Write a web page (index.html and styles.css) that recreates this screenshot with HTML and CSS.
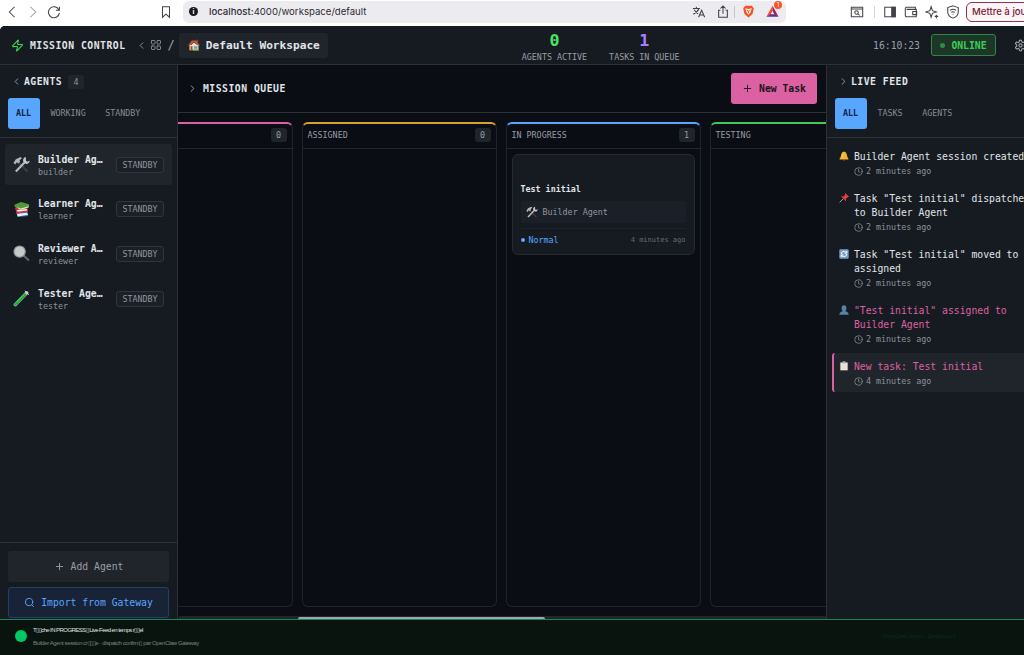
FILE: index.html
```
<!DOCTYPE html>
<html lang="fr">
<head>
    <meta charset="UTF-8">
    <title>Mission Control</title>
    <link rel="stylesheet" href="styles.css">
</head>
<body>
    <!-- shared icons -->
    <svg class="sprite">
        <symbol id="left" viewBox="0 0 24 24"><path d="m15 18-6-6 6-6"/></symbol>
        <symbol id="right" viewBox="0 0 24 24"><path d="m9 18 6-6-6-6"/></symbol>
        <symbol id="plus" viewBox="0 0 24 24"><path d="M5 12h14M12 5v14"/></symbol>
        <symbol id="search" viewBox="0 0 24 24"><circle cx="11" cy="11" r="8"/><path d="m21 21-4.3-4.3"/></symbol>
        <symbol id="clock" viewBox="0 0 24 24"><circle cx="12" cy="12" r="10"/><path d="M12 6v6l4 2"/></symbol>
        <symbol id="zap" viewBox="0 0 24 24"><path d="M4 14a1 1 0 0 1-.78-1.63l9.9-10.2a.5.5 0 0 1 .86.46l-1.92 6.02A1 1 0 0 0 13 10h7a1 1 0 0 1 .78 1.63l-9.9 10.2a.5.5 0 0 1-.86-.46l1.92-6.02A1 1 0 0 0 11 14z"/></symbol>
        <symbol id="grid" viewBox="0 0 24 24"><rect x="3" y="3" width="7" height="7" rx="1"/><rect x="14" y="3" width="7" height="7" rx="1"/><rect x="14" y="14" width="7" height="7" rx="1"/><rect x="3" y="14" width="7" height="7" rx="1"/></symbol>
        <symbol id="gear" viewBox="0 0 24 24"><path d="M12.22 2h-.44a2 2 0 0 0-2 2v.18a2 2 0 0 1-1 1.73l-.43.25a2 2 0 0 1-2 0l-.15-.08a2 2 0 0 0-2.73.73l-.22.38a2 2 0 0 0 .73 2.73l.15.1a2 2 0 0 1 1 1.72v.51a2 2 0 0 1-1 1.74l-.15.09a2 2 0 0 0-.73 2.73l.22.38a2 2 0 0 0 2.73.73l.15-.08a2 2 0 0 1 2 0l.43.25a2 2 0 0 1 1 1.73V20a2 2 0 0 0 2 2h.44a2 2 0 0 0 2-2v-.18a2 2 0 0 1 1-1.73l.43-.25a2 2 0 0 1 2 0l.15.08a2 2 0 0 0 2.73-.73l.22-.39a2 2 0 0 0-.73-2.73l-.15-.08a2 2 0 0 1-1-1.74v-.5a2 2 0 0 1 1-1.74l.15-.09a2 2 0 0 0 .73-2.73l-.22-.38a2 2 0 0 0-2.73-.73l-.15.08a2 2 0 0 1-2 0l-.43-.25a2 2 0 0 1-1-1.73V4a2 2 0 0 0-2-2z"/><circle cx="12" cy="12" r="3"/></symbol>
        <symbol id="tools" viewBox="0 0 18 18">
            <path d="M5 6 15.500 16.500" stroke="#3b3d41" stroke-width="2.200"/>
            <path d="M.5 7.500 3 3.500 8 1 9.500 2.500 7 4.500 7.500 6 5.500 8 4 6.500 2.500 9z" fill="#aeb4b9" stroke="none"/>
            <path d="M3 16.500 13 6" stroke="#b7bcc0" stroke-width="2.200"/>
            <path d="M13.500 1a3.500 3.500 0 0 0-2.500 5l2 2a3.300 3.300 0 0 0 4.700-3l-2.700 1-1.300-1.200z" fill="#c4c8cb" stroke="none"/>
        </symbol>
    </svg>

    <div class="browser">
        <svg class="nav-icon b-back" viewBox="0 0 16 16"><path d="M11 2 5 8l6 6"/></svg>
        <svg class="nav-icon b-next" viewBox="0 0 16 16"><path d="m5 2 6 6-6 6"/></svg>
        <svg class="nav-icon b-reload" viewBox="0 0 16 16"><path d="M13.600 5.500A6.300 6.300 0 1 0 14.200 9M14.200 2v4h-4"/></svg>
        <svg class="nav-icon b-mark" viewBox="0 0 16 16"><path d="M4 2h8v12l-4-3.500L4 14z"/></svg>
        <div class="url">
            <span class="info">i</span>
            <span class="address"><b>localhost:</b>4000/workspace/default</span>
            <svg class="nav-icon" viewBox="0 0 16 16"><path d="M1 4h8M5 2v2M8 4C7 7 4 9 1.500 10.500M2.500 5.500C4 8 5 9 7 10M7.500 14l3.500-8 3.500 8M8.800 11.500h4.500"/></svg>
            <svg class="nav-icon u-share" viewBox="0 0 16 16"><path d="M5 6H3v8h10V6h-2M8 10V1.500M5 4l3-3 3 3"/></svg>
            <span class="url-sep"></span>
            <svg class="u-shield" viewBox="0 0 16 16"><path d="M4 1h8l2.500 3-1.500 7-5 4.500L3 11 1.500 4z" fill="#f4511e"/><path d="m4 4 4 1 4-1-1.500 5L8 12 5.500 9z" fill="#fff"/><path d="m5.500 6 2 1L8 10l.5-3 2-1" stroke="#f4511e"/></svg>
            <span class="rewards">
                <svg viewBox="0 0 16 16"><path d="M8 1 .5 14.500 5.500 12 8 7z" fill="#ff4724"/><path d="M8 1l7.500 13.500-5-2.500L8 7z" fill="#9e1f63"/><path d="M.5 14.500h15l-5-3h-5z" fill="#662d91"/></svg>
                <em>1</em>
            </span>
        </div>
        <div class="browser-right">
            <svg class="nav-icon" viewBox="0 0 16 16"><path d="M1.500 2.500h13v11h-13zM1.500 4.500h13"/><circle cx="7.500" cy="8.500" r="2"/><path d="m9 10 2 2"/></svg>
            <span class="br-sep"></span>
            <svg class="nav-icon" viewBox="0 0 16 16"><path d="M2 2.500h12v11H2z"/><path d="M10 2.500h4v11h-4z" fill="#454248"/></svg>
            <svg class="nav-icon" viewBox="0 0 16 16"><path d="M13 5V2.500H3A1.500 1.500 0 0 0 1.500 4v8A1.500 1.500 0 0 0 3 13.500h11V5H3M14.500 7.500H10v3.500h4.500z"/></svg>
            <svg class="nav-icon" viewBox="0 0 16 16"><path d="m7 2 1.500 4.500L13 8 8.500 9.500 7 14 5.500 9.500 1 8l4.500-1.500zM13 11v4M11 13h4"/></svg>
            <svg class="nav-icon" viewBox="0 0 16 16"><path d="m8 1 6 2v5c0 4-3 6-6 7-3-1-6-3-6-7V3zM4.500 6.200q3.500-2.500 7 0M6 8.500q2-1.500 4 0M7.500 10.500h1"/></svg>
            <span class="update">Mettre à jour</span>
        </div>
    </div>

    <div class="app">
        <header class="topbar">
            <svg class="icon zap"><use href="#zap"/></svg>
            <span class="brand">MISSION CONTROL</span>
            <svg class="icon crumb-left"><use href="#left"/></svg>
            <svg class="icon crumb-grid"><use href="#grid"/></svg>
            <span class="slash">/</span>
            <div class="workspace">
                <svg class="house" viewBox="0 0 16 16"><path d="M2 8h12v7H2z" fill="#e9d9b8"/><path d="M0 8.500 5 2h6l5 6.500-2 .5-6-5-6 5z" fill="#c0563f"/><path d="M8 4.500 13.500 9H3z" fill="#f0e2c6"/><path d="M11 1h2.500v4L11 3z" fill="#914531"/><path d="M3.500 9.500h2.500V15H3.500z" fill="#9b4f2c"/><path d="M8 9.500h4.500V13H8z" fill="#5aa4cf"/><path d="M7 14h7.500v1.500H7z" fill="#6b9b3d"/></svg>
                <span>Default Workspace</span>
            </div>
            <div class="stats">
                <div class="stat"><strong class="green">0</strong><span>AGENTS ACTIVE</span></div>
                <div class="stat"><strong class="purple">1</strong><span>TASKS IN QUEUE</span></div>
            </div>
            <span class="time">16:10:23</span>
            <span class="online"><i></i>ONLINE</span>
            <svg class="icon gear"><use href="#gear"/></svg>
        </header>

        <div class="content">
            <aside class="agents">
                <div class="side-head">
                    <div class="side-title"><svg class="icon"><use href="#left"/></svg>AGENTS<span class="count">4</span></div>
                    <div class="tabs"><span class="tab active">ALL</span><span class="tab">WORKING</span><span class="tab">STANDBY</span></div>
                </div>
                <div class="agent-list">
                    <div class="agent selected">
                        <svg class="avatar"><use href="#tools"/></svg>
                        <div class="who"><b>Builder Ag…</b><span>builder</span></div>
                        <span class="status">STANDBY</span>
                    </div>
                    <div class="agent">
                        <svg class="avatar" viewBox="0 0 18 18"><path d="m3 10 2 7 11-1-1-6z" fill="#3977c4"/><path d="m4 13.500 11-1 1 2-11 2z" fill="#eee"/><path d="m2 7 2 6.500 12-2-1-4.500z" fill="#d52f35"/><path d="m4 9.500 11-1v1.500l-10 1.500z" fill="#eee"/><path d="m1.500 4 7-3L17 3.500v2.500L8 9 2 6z" fill="#4f9b3b"/><path d="m3 6 5 2L16.500 5.500V7L8 9.500z" fill="#d9e5ca"/></svg>
                        <div class="who"><b>Learner Ag…</b><span>learner</span></div>
                        <span class="status">STANDBY</span>
                    </div>
                    <div class="agent">
                        <svg class="avatar" viewBox="0 0 18 18"><path d="m11 11 6 5.500" stroke="#66605f" stroke-width="2.200"/><circle cx="7" cy="7" r="6" fill="#c4cacc" stroke="#8e9497" stroke-width="1.200"/></svg>
                        <div class="who"><b>Reviewer A…</b><span>reviewer</span></div>
                        <span class="status">STANDBY</span>
                    </div>
                    <div class="agent">
                        <svg class="avatar" viewBox="0 0 18 18"><path d="M2.500 15.500 14.500 3" stroke="#b9c8c4" stroke-width="3.600" stroke-linecap="round"/><path d="M2.700 15.300 12.500 5" stroke="#14a82c" stroke-width="2.800" stroke-linecap="round"/><path d="m4 13 8-8.500" stroke="#7de388" stroke-width=".7"/><path d="m12.500 1 4.500 4" stroke="#dce4e2" stroke-width="1"/></svg>
                        <div class="who"><b>Tester Age…</b><span>tester</span></div>
                        <span class="status">STANDBY</span>
                    </div>
                </div>
                <div class="side-actions">
                    <div class="btn add"><svg class="icon"><use href="#plus"/></svg>Add Agent</div>
                    <div class="btn import"><svg class="icon"><use href="#search"/></svg>Import from Gateway</div>
                </div>
            </aside>

            <main class="queue">
                <div class="queue-head">
                    <svg class="icon"><use href="#right"/></svg>
                    <h1>MISSION QUEUE</h1>
                    <span class="new-task"><svg class="icon"><use href="#plus"/></svg>New Task</span>
                </div>
                <div class="board">
                    <section class="column pink">
                        <div class="col-head"><span></span><span class="num">0</span></div>
                    </section>
                    <section class="column yellow">
                        <div class="col-head"><span>ASSIGNED</span><span class="num">0</span></div>
                    </section>
                    <section class="column blue">
                        <div class="col-head"><span>IN PROGRESS</span><span class="num">1</span></div>
                        <div class="card">
                            <b class="card-title">Test initial</b>
                            <div class="assignee"><svg><use href="#tools"/></svg>Builder Agent</div>
                            <div class="card-foot"><span class="priority"><i></i>Normal</span><span class="ago">4 minutes ago</span></div>
                        </div>
                    </section>
                    <section class="column lime">
                        <div class="col-head"><span>TESTING</span></div>
                    </section>
                </div>
                <div class="scrollbar"><div class="thumb"></div></div>
            </main>

            <aside class="feed">
                <div class="side-head">
                    <div class="side-title"><svg class="icon"><use href="#right"/></svg>LIVE FEED</div>
                    <div class="tabs"><span class="tab active">ALL</span><span class="tab">TASKS</span><span class="tab">AGENTS</span></div>
                </div>
                <div class="events">
                    <div class="event">
                        <svg class="emoji" viewBox="0 0 16 16"><path d="M1 12c2-2 2-5 3-8 1-4 7-4 8 0 1 3 1 6 3 8v1.500H1z" fill="#f3b52c"/><path d="M5 11c1-2 .5-5 2-7" stroke="#ffe28a"/><path d="M6 13h4a2 2 0 0 1-4 0z" fill="#9c6715"/></svg>
                        <div><p>Builder Agent session created</p><small><svg class="icon"><use href="#clock"/></svg>2 minutes ago</small></div>
                    </div>
                    <div class="event">
                        <svg class="emoji" viewBox="0 0 16 16"><path d="m1 15 6-6" stroke="#a9afb5" stroke-width="1.500"/><path d="M10 0l6 6-2.500 1-2.500 2.500.5 4L3 5l4 .5L9.500 3z" fill="#e33b40"/></svg>
                        <div><p>Task "Test initial" dispatched<br>to Builder Agent</p><small><svg class="icon"><use href="#clock"/></svg>2 minutes ago</small></div>
                    </div>
                    <div class="event">
                        <svg class="emoji" viewBox="0 0 16 16"><rect x=".5" y=".5" width="15" height="15" rx="2" fill="#759fc6"/><path d="M3.500 8a4.500 4.500 0 0 1 8-2.500M12.500 8a4.500 4.500 0 0 1-8 2.500M12.500 3v3.500H9M3.500 13V9.500H7" stroke="#fff" stroke-width="1.600"/></svg>
                        <div><p>Task "Test initial" moved to<br>assigned</p><small><svg class="icon"><use href="#clock"/></svg>2 minutes ago</small></div>
                    </div>
                    <div class="event hot">
                        <svg class="emoji" viewBox="0 0 16 16"><ellipse cx="8" cy="5" rx="3.800" ry="4.700" fill="#5684a8"/><path d="M.5 15.500c0-4 3-5 5.500-5.500V8h4v2c2.500.5 5.500 1.500 5.500 5.500z" fill="#5684a8"/></svg>
                        <div><p>"Test initial" assigned to<br>Builder Agent</p><small><svg class="icon"><use href="#clock"/></svg>2 minutes ago</small></div>
                    </div>
                    <div class="event hot current">
                        <svg class="emoji" viewBox="0 0 16 16"><rect x="1.500" y="1.500" width="13" height="14" rx="1" fill="#8b6a48"/><path d="M2.500 3h11v11.500h-11z" fill="#e7e8e5"/><path d="M5.500 .5h5V4h-5z" fill="#a9aeb2"/><path d="M5 7h6M5 9.500h6M5 12h6" stroke="#c7c9c9" stroke-width=".6"/></svg>
                        <div><p>New task: Test initial</p><small><svg class="icon"><use href="#clock"/></svg>4 minutes ago</small></div>
                    </div>
                </div>
            </aside>
        </div>
    </div>

    <footer class="caption">
        <i class="dot"></i>
        <div class="caption-text">
            <b>T▯▯che IN PROGRESS▯ Live Feed en temps r▯▯el</b>
            <span>Builder Agent session cr▯▯▯e · dispatch confirm▯ par OpenClaw Gateway</span>
        </div>
        <span class="credit">OpenClaw Series · @stpmount</span>
    </footer>
</body>
</html>
```
FILE: styles.css
```
* {
    box-sizing: border-box;
}
body {
    margin: 0;
    width: 1024px;
    height: 655px;
    overflow: hidden;
    display: flex;
    flex-direction: column;
    background: #fff;
    color: #e0e4e9;
    font-family: "DejaVu Sans Mono", monospace;
    font-size: 9.75px;
    white-space: nowrap;
}
svg {
    fill: none;
    flex-shrink: 0;
}
.sprite {
    display: none;
}
.icon {
    width: 11px;
    height: 11px;
    stroke: currentColor;
    stroke-width: 2;
    stroke-linecap: round;
    stroke-linejoin: round;
}

/* browser bar */
.browser {
    height: 26px;
    flex-shrink: 0;
    padding: 0 0 3px 5px;
    display: flex;
    align-items: center;
    font-family: Inter, sans-serif;
    color: #2f2d33;
}
.nav-icon {
    width: 14px;
    height: 14px;
    stroke: #454248;
    stroke-width: 1.2;
}
.b-next {
    margin-left: 7px;
    opacity: .5;
}
.b-reload {
    margin-left: 7px;
}
.b-mark {
    margin-left: 98px;
}
.url {
    margin-left: 10px;
    width: 603px;
    height: 22px;
    flex-shrink: 0;
    padding: 0 6px;
    display: flex;
    align-items: center;
    border-radius: 6px;
    background: #ecebf0;
}
.info {
    width: 9px;
    height: 9px;
    border-radius: 50%;
    background: #19181c;
    color: #fff;
    font-size: 7px;
    font-weight: bold;
    line-height: 9px;
    text-align: center;
}
.address {
    margin: 0 auto 0 11px;
    font-size: 9.6px;
}
.address b {
    font-weight: 500;
}
.u-share {
    margin-left: 10px;
}
.url-sep {
    width: 1px;
    height: 12px;
    margin: 0 7px 0 4px;
    background: #c7c5cc;
}
.u-shield {
    width: 13px;
    height: 13px;
}
.rewards {
    position: relative;
    margin: 0 1px 0 11px;
    height: 13px;
}
.rewards svg {
    display: block;
    width: 13px;
    height: 13px;
}
.rewards em {
    position: absolute;
    top: -4px;
    right: -3px;
    width: 8px;
    height: 8px;
    border-radius: 50%;
    background: #fb542b;
    color: #fff;
    font-size: 6px;
    font-style: normal;
    line-height: 8px;
    text-align: center;
}
.browser-right {
    margin-left: 64px;
    flex-shrink: 0;
    display: flex;
    align-items: center;
    gap: 7px;
}
.br-sep {
    width: 1px;
    height: 12px;
    margin: 0 1px 0 3px;
    background: #d5d3d9;
}
.update {
    height: 20px;
    width: 75px;
    margin-left: -1px;
    padding-left: 5px;
    border: 1px solid #92324f;
    border-radius: 6px;
    background: #fff4f6;
    color: #701b36;
    font-size: 9.6px;
    font-weight: 500;
    line-height: 18px;
}

/* app frame */
.app {
    height: 593px;
    flex-shrink: 0;
    overflow: hidden;
    border-radius: 5px 0 0 0;
    background: #0a0d14;
}
.topbar {
    height: 39px;
    padding: 0 0 0 11px;
    display: flex;
    align-items: center;
    background: #161b21;
    border-bottom: 1px solid #2c3137;
}
.zap {
    width: 13px;
    height: 13px;
    color: #3fd65a;
}
.brand {
    margin-left: 6px;
    font-weight: bold;
    letter-spacing: .5px;
}
.crumb-left {
    margin-left: 10px;
    color: #949aa3;
}
.crumb-grid {
    margin-left: 3px;
    width: 12px;
    height: 12px;
    color: #7f858e;
}
.slash {
    margin-left: 6px;
    font-size: 12px;
    color: #9ba1a9;
}
.workspace {
    margin-left: 4px;
    width: 149px;
    height: 25px;
    padding-left: 9px;
    display: flex;
    align-items: center;
    gap: 6px;
    border-radius: 3px;
    background: #20252b;
    font-size: 11.15px;
    font-weight: bold;
}
.house {
    width: 12px;
    height: 12px;
}
.stats {
    margin-left: 194px;
    padding-top: 2px;
    display: flex;
    gap: 22px;
}
.stat {
    display: flex;
    flex-direction: column;
    align-items: center;
    font-size: 8.35px;
    line-height: 12px;
    color: #989ea7;
}
.stat strong {
    margin-bottom: 1px;
    font-size: 16.7px;
    line-height: 20px;
}
.green {
    color: #4be365;
}
.purple {
    color: #ab7cff;
}
.time {
    margin-left: auto;
    color: #989ea7;
}
.online {
    margin: 0 18px 0 11px;
    width: 65px;
    height: 22px;
    display: flex;
    align-items: center;
    justify-content: center;
    gap: 6px;
    border: 1px solid #338643;
    border-radius: 3px;
    background: #1c3727;
    color: #3fcb56;
    font-weight: bold;
}
.online i {
    width: 5px;
    height: 5px;
    border-radius: 50%;
    background: #2e8d40;
}
.gear {
    width: 13px;
    height: 13px;
    margin-right: -3px;
    color: #a0a6ae;
}
.content {
    height: 554px;
    display: flex;
}

/* sidebars */
.agents {
    width: 178px;
    flex-shrink: 0;
    display: flex;
    flex-direction: column;
    background: #161b21;
    border-right: 1px solid #2c3137;
}
.side-head {
    height: 73px;
    flex-shrink: 0;
    padding: 9px 8px 0;
    border-bottom: 1px solid #2c3137;
}
.side-title {
    height: 15px;
    padding-left: 3px;
    display: flex;
    align-items: center;
    font-weight: bold;
    letter-spacing: .5px;
}
.side-title .icon {
    margin-right: 2px;
    color: #9aa0a8;
}
.count {
    margin-left: 6px;
    width: 16px;
    height: 14px;
    border-radius: 3px;
    background: #20252b;
    color: #8d939c;
    font-size: 8.35px;
    font-weight: normal;
    line-height: 14px;
    text-align: center;
}
.tabs {
    margin-top: 9px;
    display: flex;
}
.tab {
    height: 31px;
    border-radius: 3px;
    color: #858b94;
    font-size: 8.35px;
    line-height: 31px;
}
.tab + .tab {
    padding: 0 9px 0 10.5px;
}
.tab.active {
    width: 32px;
    padding: 0 8px;
    background: #58a6ff;
    color: #10243b;
    font-weight: bold;
}
.agent-list {
    flex: 1;
    padding: 6px 5px;
}
.agent {
    height: 41px;
    margin-bottom: 3.7px;
    padding: 0 8px;
    display: flex;
    align-items: center;
    border-radius: 3px;
}
.agent.selected {
    background: #20252b;
}
.avatar {
    width: 17px;
    height: 17px;
}
.who {
    width: 66px;
    margin-left: 8px;
    padding-top: 1px;
    display: flex;
    flex-direction: column;
}
.who b {
    line-height: 13px;
}
.who span {
    color: #8b919a;
    font-size: 8.35px;
    line-height: 12px;
}
.status {
    margin-left: auto;
    width: 48px;
    height: 16px;
    border: 1px solid #30353b;
    border-radius: 3px;
    background: #1b2026;
    color: #8f959e;
    font-size: 8.35px;
    line-height: 14px;
    text-align: center;
}
.side-actions {
    height: 77px;
    padding: 8px 8px 0;
    border-top: 1px solid #2c3137;
}
.btn {
    height: 31px;
    display: flex;
    align-items: center;
    justify-content: center;
    gap: 6px;
    border-radius: 3px;
}
.add {
    background: #20252b;
    color: #989ea7;
}
.import {
    margin-top: 5px;
    border: 1px solid #243f66;
    background: #192337;
    color: #58a6ff;
}

/* mission queue */
.queue {
    width: 649px;
    flex-shrink: 0;
    overflow: hidden;
    display: flex;
    flex-direction: column;
}
.queue-head {
    height: 48px;
    flex-shrink: 0;
    padding: 0 10px 0 9px;
    display: flex;
    align-items: center;
    border-bottom: 1px solid #2c3137;
}
.queue-head > .icon {
    color: #9aa0a8;
}
h1 {
    margin: 0 auto 0 5px;
    font-size: 9.75px;
    letter-spacing: .5px;
}
.new-task {
    width: 86px;
    height: 31px;
    display: flex;
    align-items: center;
    justify-content: center;
    gap: 6px;
    border-radius: 3px;
    background: #db61a2;
    color: #1c1420;
    font-weight: bold;
}
.board {
    height: 494px;
    flex-shrink: 0;
    margin-left: -80.5px;
    padding-top: 8.5px;
    display: flex;
    gap: 9px;
}
.column {
    width: 195px;
    height: 485px;
    flex-shrink: 0;
    border: 1px solid #1f242b;
    border-top: 2px solid;
    border-radius: 6px;
}
.pink {
    border-top-color: #db61a2;
}
.yellow {
    border-top-color: #d9a02b;
}
.blue {
    border-top-color: #58a6ff;
}
.lime {
    border-top-color: #42c955;
}
.col-head {
    height: 25.5px;
    padding: 0 5px 1px;
    display: flex;
    align-items: center;
    justify-content: space-between;
    border-bottom: 1px solid #22272e;
    color: #969ca5;
    font-size: 8.35px;
}
.num {
    width: 16px;
    height: 14px;
    border-radius: 3px;
    background: #20252b;
    line-height: 14px;
    text-align: center;
}
.card {
    margin: 5px;
    height: 101px;
    padding: 29px 8px 0;
    border: 1px solid #262b31;
    border-radius: 6px;
    background: #161b21;
    font-size: 8.35px;
}
.card-title {
    display: block;
    line-height: 11px;
}
.assignee {
    margin-top: 6px;
    height: 22px;
    padding-left: 5px;
    display: flex;
    align-items: center;
    gap: 5px;
    border-radius: 3px;
    background: #1b2028;
    color: #8f959e;
}
.assignee svg {
    width: 12px;
    height: 12px;
}
.card-foot {
    margin-top: 5px;
    height: 23px;
    display: flex;
    align-items: center;
    justify-content: space-between;
    border-top: 1px solid #1d2228;
}
.priority {
    display: flex;
    align-items: center;
    gap: 4px;
    color: #58a6ff;
}
.priority i {
    width: 4px;
    height: 4px;
    border-radius: 50%;
    background: #58a6ff;
}
.ago {
    color: #656b74;
    font-size: 7px;
}
.scrollbar {
    margin-top: 9px;
    height: 3px;
    border-radius: 3px 3px 0 0;
    background: #21252c;
}
.thumb {
    width: 247px;
    height: 2px;
    margin: 1px 0 0 120px;
    border-radius: 2px 2px 0 0;
    background: #a3a7b0;
}

/* live feed */
.feed {
    width: 223px;
    flex-shrink: 0;
    margin-left: -1px;
    background: #161b21;
    border-left: 1px solid #2c3137;
}
.events {
    padding: 6px 5px;
}
.event {
    padding: 6px 0 6px 7px;
    display: flex;
    gap: 5px;
    line-height: 14px;
    margin-bottom: 2px;
}
.event p {
    margin: 0;
}
.event small {
    margin-top: 2px;
    padding-bottom: 1px;
    display: flex;
    align-items: center;
    gap: 3px;
    color: #8b919a;
    font-size: 8.35px;
    line-height: 11px;
}
.event small .icon {
    width: 9px;
    height: 9px;
}
.emoji {
    width: 10px;
    height: 10px;
    margin-top: 1px;
}
.hot {
    color: #db61a2;
}
.event.current {
    height: 39px;
    margin-top: -1px;
    padding: 7px 0 0 5px;
    border-left: 2px solid #db61a2;
    border-radius: 3px 0 0 3px;
    background: #20252b;
}

/* caption strip */
.caption {
    height: 36px;
    flex-shrink: 0;
    padding: 0 69px 3px 15px;
    display: flex;
    align-items: center;
    border-top: 1px solid #16884c;
    background: #0a140e;
    font-family: "Liberation Sans", sans-serif;
}
.dot {
    width: 12px;
    height: 12px;
    border-radius: 50%;
    background: #00ca64;
}
.caption-text {
    margin-left: 6px;
    display: flex;
    flex-direction: column;
    gap: 3px;
    line-height: 10px;
}
.caption-text b {
    font-size: 6px;
    font-weight: normal;
    letter-spacing: -.56px;
}
.caption-text span {
    color: #78877d;
    font-size: 6px;
    letter-spacing: -.41px;
}
.credit {
    margin-left: auto;
    color: #062d1b;
    font-size: 6px;
    letter-spacing: -.35px;
}
```
